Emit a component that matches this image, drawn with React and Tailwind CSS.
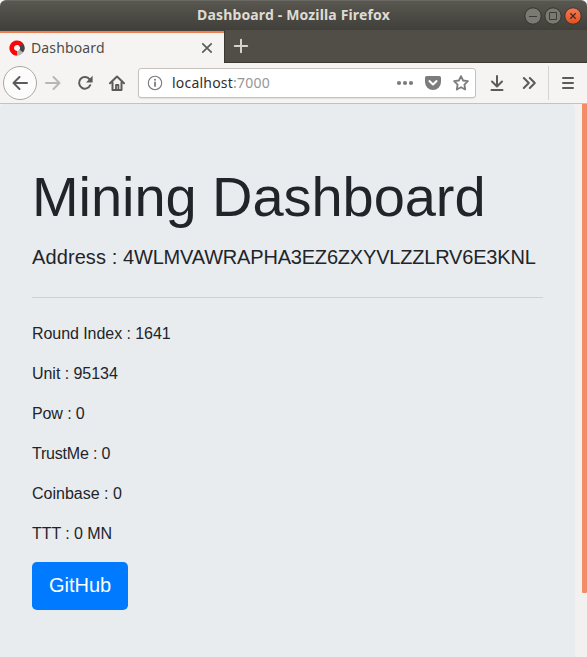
import React from "react";

const stats = [
  { text: "Round Index : 1641", tracking: "tracking-[-0.06px]" },
  { text: "Unit : 95134", tracking: "tracking-[-0.04px]" },
  { text: "Pow : 0", tracking: "tracking-[-0.1px]" },
  { text: "TrustMe : 0", tracking: "tracking-[-0.2px]" },
  { text: "Coinbase : 0", tracking: "tracking-normal" },
  { text: "TTT : 0 MN", tracking: "tracking-[-0.05px]" },
];

function Icon({ children, className = "", width = 2 }) {
  return (
    <svg
      viewBox="0 0 16 16"
      className={`h-4 w-4 shrink-0 ${className}`}
      fill="none"
      stroke="currentColor"
      strokeWidth={width}
      strokeLinecap="round"
      strokeLinejoin="round"
    >
      {children}
    </svg>
  );
}

function TitleBar() {
  return (
    <div className="bg-white">
      <header className="grid h-[30px] grid-cols-[1fr_auto_1fr] items-center rounded-t-[6px] border-t border-[#6a6862] bg-linear-to-b from-[#595750] to-[#403f3a]">
        <span />
        <h1 className="-mt-px whitespace-nowrap text-[14px] leading-5 font-bold tracking-[0.15px] text-[#dfdbd2]">
          Dashboard - Mozilla Firefox
        </h1>
        <div className="flex justify-end gap-[2px] pr-[5px]">
          <svg viewBox="0 0 18 18" className="h-[18px] w-[18px]">
            <circle cx="9" cy="9" r="8.2" fill="#7b7971" stroke="#35342f" />
            <path d="M5 9.5h8" stroke="#3c3b37" />
          </svg>
          <svg viewBox="0 0 18 18" className="h-[18px] w-[18px]">
            <circle cx="9" cy="9" r="8.2" fill="#7b7971" stroke="#35342f" />
            <path d="M5.5 5.5h7v7h-7z" fill="none" stroke="#3c3b37" />
          </svg>
          <svg viewBox="0 0 18 18" className="h-[18px] w-[18px]">
            <defs>
              <linearGradient id="close" x2="0" y2="1">
                <stop stopColor="#f37c55" />
                <stop offset="1" stopColor="#e2501f" />
              </linearGradient>
            </defs>
            <circle cx="9" cy="9" r="8.2" fill="url(#close)" stroke="#43322b" />
            <path d="M6.3 6.3l5.4 5.4M11.7 6.3l-5.4 5.4" stroke="#4a2b20" strokeWidth="1.3" />
          </svg>
        </div>
      </header>
    </div>
  );
}

function TabBar() {
  return (
    <div className="flex h-[33px] bg-[#504e46]">
      <div className="h-full w-[224px] border-t border-[#46443f]">
        <div className="flex h-full items-center border-t-2 border-[#ee7f53] bg-[#f5f4f2] pl-[9px]">
          <svg viewBox="0 0 16 16" className="h-4 w-4 shrink-0" fill="none" strokeWidth="4.6">
            <path d="M12.2 11.2A5.3 5.3 0 0 1 7.5 13.3" stroke="#b5b5b5" />
            <path d="M12 4.5A5.3 5.3 0 0 1 12.2 11.2" stroke="#444447" />
            <path d="M8 13.3A5.3 5.3 0 1 1 12.4 5" stroke="#f80808" />
          </svg>
          <span className="ml-[6px] text-[14px] leading-5 tracking-[0.14px] text-[#4c4c4c]">Dashboard</span>
          <Icon className="mr-[9px] ml-auto text-[#5c5c5b]" width={1.7}>
            <path d="M3.8 3.8l8.4 8.4M12.2 3.8l-8.4 8.4" />
          </Icon>
        </div>
      </div>
      <div className="flex flex-1 items-center border-b border-l border-[#393832] pl-2">
        <Icon className="text-[#d6d3ca]" width={2}>
          <path d="M8 1.8v12.4M1.8 8h12.4" />
        </Icon>
      </div>
    </div>
  );
}

function NavBar() {
  return (
    <nav className="flex h-[41px] items-center border-b border-[#c5c2be] bg-[#f5f4f2] text-[#5b5b5a]">
      <div className="ml-[3px] flex h-[34px] w-[34px] shrink-0 items-center justify-center rounded-full border border-[#aaa8a5] bg-[#fcfcfc]">
        <Icon><path d="M15 8H1.5M7.5 2L1.5 8l6 6" /></Icon>
      </div>
      <Icon className="ml-2 text-[#b7b6b4]"><path d="M1 8h13.5M8.5 2l6 6-6 6" /></Icon>
      <Icon className="ml-4">
        <path d="M13.2 10.2A5.8 5.8 0 1 1 12.6 4.4" />
        <path d="M15.6 0.8v6.6H9z" fill="currentColor" stroke="none" />
      </Icon>
      <Icon className="ml-4">
        <path d="M1 8.3L8 1.5l7 6.8M3.5 7.5V15h9V7.5" />
        <path d="M7 14v-4h2.4v4" strokeWidth="1.8" />
      </Icon>
      <div className="ml-[13px] flex h-[30px] w-[338px] items-center rounded-[3px] border border-[#c5c2be] bg-white px-2 shadow-[0_1px_1px_#e4e2df]">
        <Icon className="text-[#7b7b7b]" width={1.1}>
          <circle cx="8" cy="8" r="6.7" />
          <path d="M8 7.4V11" strokeWidth="1.8" />
          <path d="M8 4.7v.1" strokeWidth="2" />
        </Icon>
        <span className="ml-[9px] text-[14px] leading-5 tracking-[0.21px] text-[#303030]">
          localhost<span className="text-[#96969a]">:7000</span>
        </span>
        <svg viewBox="0 0 18 6" className="mr-[11px] ml-auto h-[6px] w-[18px] text-[#7c7c7c]" fill="currentColor">
          <circle cx="3" cy="3" r="2.1" />
          <circle cx="9" cy="3" r="2.1" />
          <circle cx="15" cy="3" r="2.1" />
        </svg>
        <Icon className="mr-3 text-[#7c7c7c]">
          <path d="M1.8 1h12.4A1.8 1.8 0 0 1 16 2.8V7A8 8 0 0 1 0 7V2.8A1.8 1.8 0 0 1 1.8 1z" fill="currentColor" stroke="none" />
          <path d="M4.4 6.1L8 9.5l3.6-3.4" stroke="#fff" />
        </Icon>
        <Icon className="mr-[-2px] text-[#7c7c7c]" width={1.8}>
          <path d="M8 1.1l2.1 4.4 4.8.7-3.5 3.4.8 4.9L8 12.2l-4.2 2.3.8-4.9L1.1 6.2l4.8-.7z" />
        </Icon>
      </div>
      <Icon className="ml-[13px]"><path d="M8 1v10M3 6.5l5 5 5-5M2.5 15h11" /></Icon>
      <Icon className="ml-4"><path d="M2.8 3l5 5-5 5M8.8 3l5 5-5 5" /></Icon>
      <div className="ml-[11px] h-[34px] w-px bg-[#d5d3d0]" />
      <Icon className="ml-[11px]"><path d="M3 3h10M3 8h10M3 13h10" /></Icon>
    </nav>
  );
}

export default function App() {
  return (
    <div className="flex h-screen w-full flex-col overflow-hidden font-['Noto_Sans',sans-serif]">
      <TitleBar />
      <TabBar />
      <NavBar />
      <div className="flex min-h-0 flex-1 bg-[#f2f1ef]">
        <main className="w-[575px] shrink-0 rounded-t-[5px] bg-[#e9ecef] px-8 pt-[59px] font-['Liberation_Sans',Arial,sans-serif] text-[#212529]">
          <h2 className="mb-3 text-[56px] leading-[67px] font-light tracking-[-0.06px]">Mining Dashboard</h2>
          <p className="mb-[25px] whitespace-nowrap text-[20px] leading-[30px]">
            <span className="tracking-[0.1px]">Address : </span>
            <span className="tracking-[-0.19px]">4WLMVAWRAPHA3EZ6ZXYVLZZLRV6E3KNL</span>
          </p>
          <hr className="mb-6 border-t border-[#cfd2d5]" />
          <div className="flex flex-col gap-4 text-base">
            {stats.map(({ text, tracking }) => (
              <p key={text} className={tracking}>{text}</p>
            ))}
          </div>
          <button className="mt-4 h-12 w-24 rounded-[4.8px] bg-[#007bff] pb-[2px] text-[20px] leading-[30px] text-white">
            GitHub
          </button>
        </main>
        <div className="flex flex-1 justify-end">
          <div className="h-[489px] w-[5px] rounded-b-[1px] bg-[#f28d68]" />
        </div>
      </div>
    </div>
  );
}
